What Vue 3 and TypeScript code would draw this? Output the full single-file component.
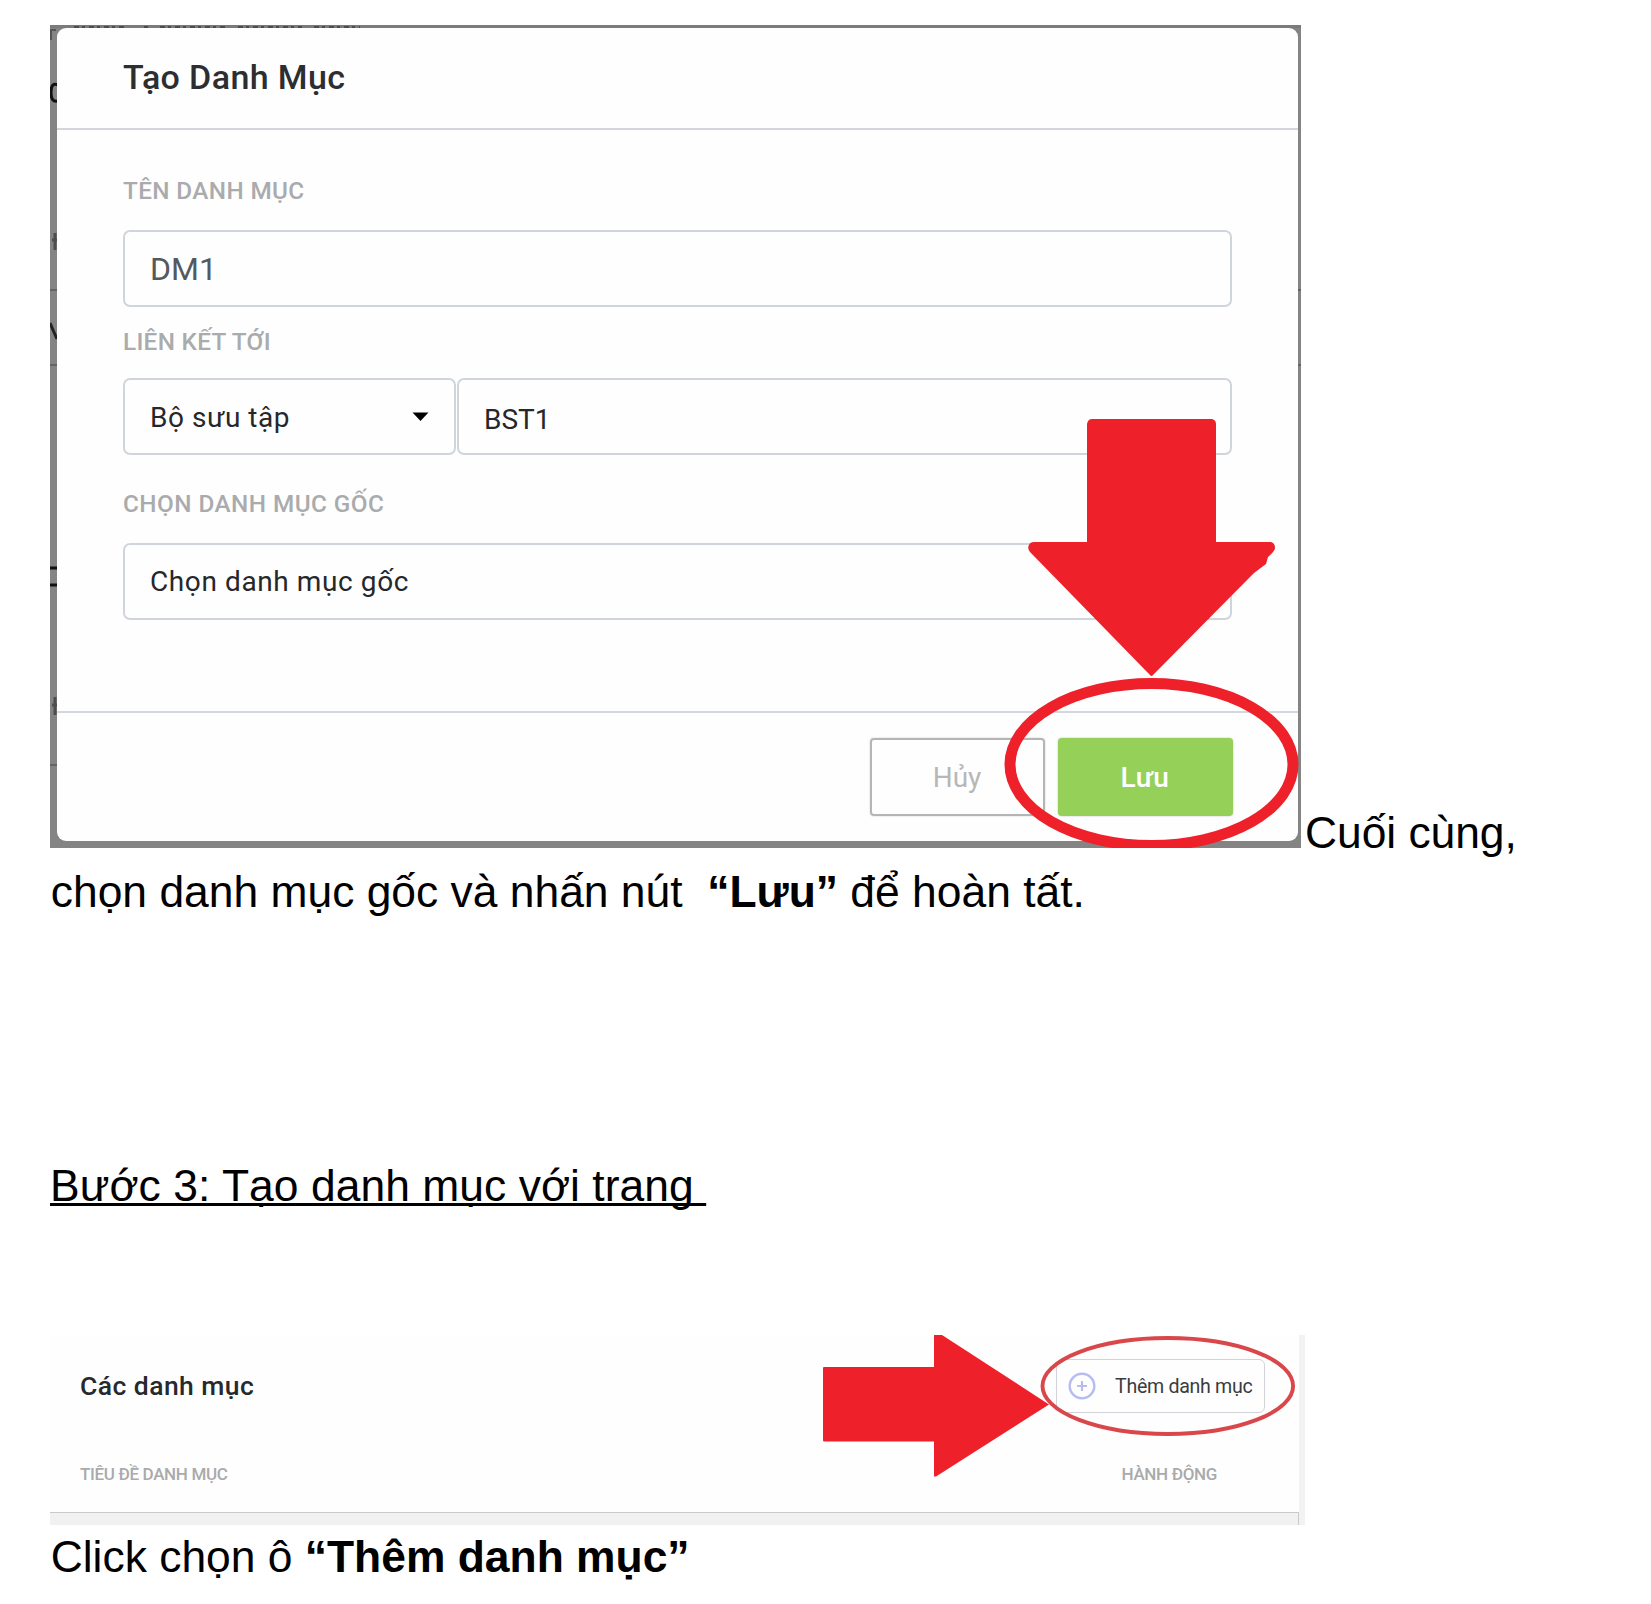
<script setup lang="ts">
const labels = {
  name: 'TÊN DANH MỤC',
  link: 'LIÊN KẾT TỚI',
  parent: 'CHỌN DANH MỤC GỐC',
}
</script>

<template>
  <main class="page">
    <p class="para first">
      <span class="shot modal-shot">
        <svg class="behind" width="1251" height="823" viewBox="0 0 1251 823">
          <rect width="1251" height="823" fill="#848484" />
          <rect width="1251" height="3" fill="#7b7b7b" />
          <path d="M24 2H76M94 2H98M110 2H178M188 2H252M264 2H310" stroke="#4c4c4c" stroke-width="2" stroke-dasharray="5 3 3 4" />
          <path d="M1 15V5H6" fill="none" stroke="#555" stroke-width="2" />
          <path d="M8 60Q1 57 1 67Q1 78 8 76" fill="none" stroke="#111" stroke-width="3" />
          <path d="M5 208V225M2 215H7M5 672V690M2 680H7" stroke="#4d4d4d" stroke-width="3" />
          <path d="M0 298L7 314" stroke="#222" stroke-width="3" />
          <path d="M0 543H7M0 560H7" stroke="#111" stroke-width="3" />
          <path d="M0 265H7M0 340H7M0 740H7M1248 265H1251M1248 340H1251" stroke="#646464" stroke-width="2" />
        </svg>
        <span class="dialog">
          <span class="head"><span class="t title">Tạo Danh Mục</span></span>
          <span class="body">
            <span class="t label l1">{{ labels.name }}</span>
            <span class="field f1"><span class="t dm">DM1</span></span>
            <span class="t label l2">{{ labels.link }}</span>
            <span class="pair">
              <span class="field select">
                <span class="t val v1">Bộ sưu tập</span>
                <svg class="caret" width="17" height="10" viewBox="0 0 17 10"><path d="M0.5 0.5H16.5L8.5 9Z" fill="#000" /></svg>
              </span>
              <span class="field grow"><span class="t val v2">BST1</span></span>
            </span>
            <span class="t label l3">{{ labels.parent }}</span>
            <span class="field f3"><span class="t val v3">Chọn danh mục gốc</span></span>
          </span>
          <span class="foot">
            <span class="btn cancel"><span class="t">Hủy</span></span>
            <span class="btn save"><span class="t">Lưu</span></span>
          </span>
        </span>
        <svg class="over" width="1251" height="823" viewBox="0 0 1251 823">
          <path d="M1042 394H1162Q1166 395 1166 399V517H1221Q1225 518 1225 523Q1225 526 1218 532L1216 539L1204 548L1103 650Q1101.500 652 1100 650L980 527Q977 523 979 520Q980 517 984 517H1037V399Q1038 394 1042 394Z" fill="#ee2029" />
          <ellipse cx="1101.500" cy="739.500" rx="141.500" ry="81" fill="none" stroke="#ee2029" stroke-width="11" />
        </svg>
      </span><span class="cuoi">Cuối cùng,</span><br />
      <span class="line2">chọn danh mục gốc và nhấn nút&nbsp; <b>“Lưu”</b> để hoàn tất.</span>
    </p>

    <p class="para step"><u>Bước 3: Tạo danh mục với trang&nbsp;</u></p>

    <section class="shot list-shot">
      <div class="panel">
        <div class="row top">
          <span class="t listname">Các danh mục</span>
          <span class="add">
            <svg width="28" height="28" viewBox="0 0 28 28" fill="none" stroke="#b7bdf0">
              <circle cx="14" cy="14" r="12.300" stroke-width="2.500" />
              <path d="M14 9V19M9 14H19" stroke-width="2.200" />
            </svg>
            <span class="t addtext">Thêm danh mục</span>
          </span>
        </div>
        <div class="row cols">
          <span class="t col c1">TIÊU ĐỀ DANH MỤC</span>
          <span class="t col c2">HÀNH ĐỘNG</span>
        </div>
      </div>
      <div class="under"></div>
      <svg class="over" width="1255" height="190" viewBox="0 0 1255 190">
        <path d="M774 32H884V0H892L999 69.500L886 141.500H884V106.500H774Q773 106.500 773 105V33Q773 32 774 32Z" fill="#ee2029" />
        <ellipse cx="1117.800" cy="51" rx="125.300" ry="48" fill="none" stroke="#d9474b" stroke-width="3.900" />
      </svg>
    </section>

    <p class="para last">Click chọn ô <b>“Thêm danh mục”</b></p>
  </main>
</template>

<style>
body { background: #fff; }
</style>

<style scoped>
.page {
  box-sizing: border-box;
  width: 1651px;
  height: 1604px;
  padding: 25px 50px 0;
  overflow: hidden;
  background: #fff;
  color: #000;
}
.para {
  margin: 0;
  font: 44.4px/59px "Liberation Sans", Arial, sans-serif;
  white-space: nowrap;
}
.shot { position: relative; overflow: hidden; }
.modal-shot {
  display: inline-block;
  width: 1251px;
  height: 823px;
  font-family: Roboto, sans-serif;
}
.cuoi { margin-left: 4px; letter-spacing: -0.05px; }
.line2 { margin-left: 0.8px; }
.behind, .over { position: absolute; left: 0; top: 0; display: block; }
.t { display: block; white-space: nowrap; }
.dialog {
  position: relative;
  box-sizing: border-box;
  display: flex;
  flex-direction: column;
  width: 1241px;
  height: 813px;
  margin: 3px 0 0 7px;
  background: #fefefe;
  border-radius: 9px;
}
.head {
  box-sizing: border-box;
  height: 102px;
  padding: 29px 0 0 66px;
  border-bottom: 2px solid #d2d6dc;
}
.title { font-size: 34px; line-height: 40px; font-weight: 500; letter-spacing: 0.38px; color: #2c2e31; }
.body {
  box-sizing: border-box;
  display: flex;
  flex-direction: column;
  height: 583px;
  padding: 0 66px;
  border-bottom: 2px solid #d2d8de;
}
.label { font-size: 24.3px; line-height: 28px; height: 28px; font-weight: 500; letter-spacing: 0.38px; color: #aaabad; }
.l1 { margin-top: 47px; }
.l2 { margin-top: 21px; letter-spacing: 0.3px; }
.l3 { margin-top: 35px; letter-spacing: 0.46px; }
.field {
  box-sizing: border-box;
  display: flex;
  align-items: center;
  height: 77px;
  padding: 0 25px;
  border: 2.5px solid #d0d5db;
  border-radius: 7px;
  background: #fefefe;
}
.f1 { margin-top: 25px; }
.pair { display: flex; gap: 1px; margin-top: 22px; }
.select { width: 333px; justify-content: space-between; }
.grow { flex: 1; }
.f3 { margin-top: 25px; }
.dm { font-size: 32px; line-height: 38px; color: #54595f; }
.val { font-size: 28px; line-height: 34px; color: #26272a; }
.v1 { margin-top: 3px; letter-spacing: 0.55px; }
.v2 { margin-top: 6px; }
.v3 { margin-top: 1px; letter-spacing: 0.6px; }
.foot {
  display: flex;
  justify-content: flex-end;
  gap: 13px;
  padding: 25px 65.5px 0 0;
}
.btn {
  box-sizing: border-box;
  display: flex;
  align-items: center;
  justify-content: center;
  width: 175px;
  height: 78px;
  padding-top: 2px;
  border-radius: 4px;
  font-size: 28px;
  line-height: 34px;
}
.cancel { border: 2.5px solid #b5b5b6; color: #b7b7b8; box-shadow: 0 0 2px #ccc; }
.save { background: #95d158; color: #fff; font-weight: 500; letter-spacing: 0.5px; box-shadow: 0 0 2px #bbb; }

.step { margin-top: 235px; }
.step u {
  letter-spacing: 0.05px;
  text-decoration-thickness: 2.5px;
  text-underline-offset: 1.5px;
  text-decoration-skip-ink: none;
}

.list-shot {
  width: 1255px;
  height: 190px;
  margin-top: 120px;
  background: #f2f2f2;
  font-family: Roboto, sans-serif;
}
.panel { width: 1249px; height: 177px; background: #fefefe; }
.under {
  box-sizing: border-box;
  width: 1249px;
  height: 13px;
  border-top: 1px solid #c6cacc;
  border-right: 1px solid #c6cacc;
  background: #f1f1f2;
}
.row { display: flex; justify-content: space-between; }
.top { padding: 24px 34px 0 30px; }
.listname { margin-top: 11px; font-size: 26.5px; line-height: 32px; font-weight: 500; letter-spacing: 0.45px; color: #26292d; }
.add {
  box-sizing: border-box;
  display: flex;
  align-items: center;
  width: 209px;
  height: 54px;
  padding-left: 11px;
  border: 1.5px solid #d1d3d8;
  border-radius: 6px;
}
.addtext { margin: 2px 0 0 19px; font-size: 19.6px; line-height: 24px; letter-spacing: -0.3px; color: #3a3c40; }
.cols { padding: 50px 82px 0 30px; }
.col { font-size: 17px; line-height: 22px; font-weight: 500; letter-spacing: -0.34px; color: #a9aaab; }
.last { margin-top: 2px; text-indent: 0.7px; }
</style>
